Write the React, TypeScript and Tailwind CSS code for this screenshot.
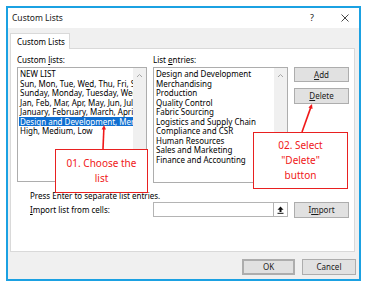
import React from 'react';

const customLists = [
  'NEW LIST',
  'Sun, Mon, Tue, Wed, Thu, Fri, Sat',
  'Sunday, Monday, Tuesday, Wednesday',
  'Jan, Feb, Mar, Apr, May, Jun, Jul, Aug',
  'January, February, March, April, May',
  'Design and Development, Merchandising',
  'High, Medium, Low',
];

const entries = [
  'Design and Development',
  'Merchandising',
  'Production',
  'Quality Control',
  'Fabric Sourcing',
  'Logistics and Supply Chain',
  'Compliance and CSR',
  'Human Resources',
  'Sales and Marketing',
  'Finance and Accounting',
];

function ScrollBar() {
  return (
    <div className="w-[13px] h-full bg-[#f0f0f0] flex justify-center pt-[5px]">
      <svg width="7" height="5" viewBox="0 0 7 5">
        <path d="M1 4 L3.5 1.5 L6 4" fill="none" stroke="#a6a6a6" strokeWidth="1" />
      </svg>
    </div>
  );
}

function WinButton({ children, className = '' }: { children: React.ReactNode; className?: string }) {
  return (
    <div
      className={`flex items-center justify-center bg-[#e1e1e1] border border-[#adadad] text-[8px] text-[#1a1a1a] ${className}`}
    >
      {children}
    </div>
  );
}

function Arrow({ x1, y1, x2, y2 }: { x1: number; y1: number; x2: number; y2: number }) {
  const a = Math.atan2(y2 - y1, x2 - x1);
  const s = 5;
  const p1 = [x2 - s * Math.cos(a - 0.45), y2 - s * Math.sin(a - 0.45)];
  const p2 = [x2 - s * Math.cos(a + 0.45), y2 - s * Math.sin(a + 0.45)];
  return (
    <>
      <line x1={x1} y1={y1} x2={x2 - 2 * Math.cos(a)} y2={y2 - 2 * Math.sin(a)} stroke="#f01818" strokeWidth="1.6" />
      <polygon points={`${x2},${y2} ${p1[0]},${p1[1]} ${p2[0]},${p2[1]}`} fill="#f01818" />
    </>
  );
}

export default function App() {
  return (
    <div
      className="relative w-[367px] h-[287px] bg-white pt-[6px] pl-[6px] text-black"
      style={{ fontFamily: '"Noto Sans", "Open Sans", sans-serif' }}
    >
      <div className="w-[355px] h-[275px] border-2 border-[#1ba1e2] flex flex-col">
        {/* Title bar */}
        <div className="h-[20px] bg-white flex items-center pl-[4px] text-[8.5px] text-[#1a1a1a]">
          <span className="flex-1">Custom Lists</span>
          <span className="w-[10px] text-center mr-[24px] text-[9px]">?</span>
          <svg width="8" height="8" viewBox="0 0 8 8" className="mr-[10px]">
            <path d="M0.5 0.5 L7.5 7.5 M7.5 0.5 L0.5 7.5" stroke="#333" strokeWidth="0.9" />
          </svg>
        </div>

        {/* Body */}
        <div className="flex-1 bg-[#f0f0f0] pl-[2px] pr-[4px] pt-[5px] flex flex-col">
          <div className="flex">
            <div className="w-[60px] h-[16px] bg-white border border-b-0 border-[#d9d9d9] flex items-center pl-[6px] text-[8px] -mb-px relative z-10">
              Custom Lists
            </div>
          </div>
          <div className="h-[204px] bg-white border border-[#d9d9d9] pl-[6px] pt-[6px] text-[8px] leading-[9.5px]">
            <div className="flex gap-[6px]">
              <div className="w-[130px] flex flex-col">
                <div className="h-[12px]">
                  Custom <u>l</u>ists:
                </div>
                <div className="h-[115px] border border-[#adadad] flex">
                  <div className="flex-1 overflow-hidden pt-[1px] pl-[1px]">
                    {customLists.map((item, i) => (
                      <div
                        key={item}
                        className={`whitespace-nowrap pl-[1px] ${
                          i === 5 ? 'bg-[#0f6fd1] text-white' : ''
                        }`}
                      >
                        {item}
                      </div>
                    ))}
                  </div>
                  <ScrollBar />
                </div>
              </div>
              <div className="w-[135px] flex flex-col">
                <div className="h-[12px]">
                  List <u>e</u>ntries:
                </div>
                <div className="h-[116px] border border-[#adadad] flex">
                  <div className="flex-1 overflow-hidden pt-[1px] pl-[2px]">
                    {entries.map(item => (
                      <div key={item} className="whitespace-nowrap">
                        {item}
                      </div>
                    ))}
                  </div>
                  <ScrollBar />
                </div>
              </div>
              <div className="w-[55px] flex flex-col pt-[12px] gap-[6px]">
                <WinButton className="h-[15px]">
                  <u>A</u>dd
                </WinButton>
                <WinButton className="h-[16px]">
                  <u>D</u>elete
                </WinButton>
              </div>
            </div>
            <div className="pl-[13px] mt-[8px]">Press Enter to separate list entries.</div>
            <div className="flex items-center mt-[1px]">
              <div className="w-[136px] pl-[13px]">
                <u>I</u>mport list from cells:
              </div>
              <div className="w-[135px] h-[15px] border border-[#b4b4b4] flex justify-end">
                <div className="w-[14px] h-full border-l border-[#b4b4b4] flex items-center justify-center">
                  <svg width="7" height="8" viewBox="0 0 7 8">
                    <path d="M3.5 0.5 L6.5 3.8 L4.5 3.8 L4.5 6 L2.5 6 L2.5 3.8 L0.5 3.8 Z" fill="#111" />
                    <rect x="0.5" y="6.8" width="6" height="1" fill="#111" />
                  </svg>
                </div>
              </div>
              <WinButton className="w-[55px] h-[16px] ml-[6px]">
                I<u>m</u>port
              </WinButton>
            </div>
          </div>
          <div className="flex justify-end gap-[7px] mt-[7px] pr-0">
            <WinButton className="w-[53px] h-[16px] border-[#0078d7] border-2">OK</WinButton>
            <WinButton className="w-[54px] h-[16px] -mr-[1px]">Cancel</WinButton>
          </div>
        </div>
      </div>

      {/* Annotations */}
      <div className="absolute left-[55px] top-[149px] w-[93px] h-[44px] bg-white border border-[#e82020] flex flex-col items-center justify-center text-[10px] leading-[15px] text-[#f01818]">
        <span>01. Choose the</span>
        <span>list</span>
      </div>
      <div className="absolute left-[253px] top-[132px] w-[95px] h-[57px] bg-white border border-[#e82020] flex flex-col items-center justify-center text-[10px] leading-[15px] text-[#f01818]">
        <span>02. Select</span>
        <span>"Delete"</span>
        <span>button</span>
      </div>
      <svg className="absolute left-0 top-0 pointer-events-none" width="367" height="287">
        <Arrow x1={103} y1={149} x2={104} y2={125} />
        <Arrow x1={302} y1={132} x2={312} y2={104} />
      </svg>
    </div>
  );
}
